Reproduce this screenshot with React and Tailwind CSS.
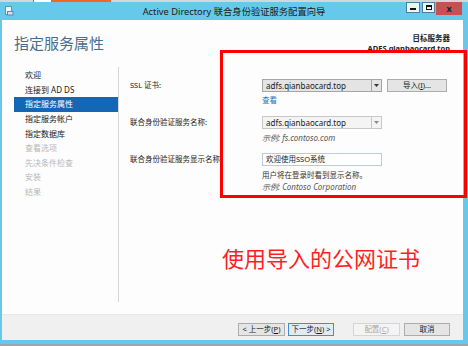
import React from 'react';

const font = "font-['Noto_Sans','Noto_Sans_CJK_SC',sans-serif]";

const steps = [
  { label: '欢迎', state: 'done' },
  { label: '连接到 AD DS', state: 'done' },
  { label: '指定服务属性', state: 'active' },
  { label: '指定服务帐户', state: 'done' },
  { label: '指定数据库', state: 'done' },
  { label: '查看选项', state: 'off' },
  { label: '先决条件检查', state: 'off' },
  { label: '安装', state: 'off' },
  { label: '结果', state: 'off' },
];

const Key = ({ k }) => <span className="underline">{k}</span>;

const WinButton = ({ children, className = '', disabled = false, focused = false }) => (
  <div
    className={`h-[13px] flex items-center justify-center border text-[7.5px] leading-none ${
      disabled
        ? 'border-[#d5d5d5] bg-[#f4f4f4] text-[#a8a8a8]'
        : focused
        ? 'border-[#3d8ee0] bg-[#e3eaf2] text-[#1a1a1a]'
        : 'border-[#acacac] bg-[#e5e5e5] text-[#1a1a1a]'
    } ${className}`}
  >
    {children}
  </div>
);

const Combo = ({ value, light = false }) => (
  <div
    className={`w-[120px] h-[13px] flex border ${
      light ? 'border-[#c8c8c8] bg-[#f4f4f4]' : 'border-[#a5a5a5] bg-[#e4e4e4]'
    }`}
  >
    <div className="flex-1 flex items-center pl-[3px] text-[8px] leading-none text-[#1a1a1a]">{value}</div>
    <div className={`w-[10px] flex items-center justify-center border-l ${light ? 'border-[#c8c8c8]' : 'border-[#a5a5a5]'}`}>
      <svg width="5" height="3" viewBox="0 0 5 3">
        <path d="M0 0 L5 0 L2.5 3 Z" fill={light ? '#8a8a8a' : '#333'} />
      </svg>
    </div>
  </div>
);

export default function App() {
  return (
    <div className={`w-[468px] h-[346px] relative overflow-hidden flex flex-col bg-[#b9c0c6] ${font}`}>
      {/* strip of the desktop above the window */}
      <div className="h-[2px] flex bg-[#d6d6d6]">
        <div className="w-[33px]" />
        <div className="w-[1px] bg-[#777]" />
        <div className="w-[17px] bg-white" />
        <div className="w-[60px] bg-[#f26522]" />
      </div>

      <div className="flex-1 flex flex-col bg-[#66c9ec] pl-[2px] pr-[5px] pb-[4px]">
        {/* title bar */}
        <div className="h-[18px] -ml-[2px] -mr-[5px] grid grid-cols-[1fr_auto_1fr]">
          <div className="flex items-center pl-[5px]">
            <svg width="9" height="10" viewBox="0 0 9 10">
              <rect x="0.5" y="0.5" width="6" height="8" fill="#eef6fb" stroke="#6d8fa8" />
              <rect x="2" y="5" width="6.5" height="4.5" fill="#5b88b0" />
              <rect x="3" y="6" width="4.5" height="2.5" fill="#cfe3f1" />
            </svg>
          </div>
          <div className="flex items-center text-[9.3px] leading-none text-[#1a1a1a] pt-[1px]">
            Active Directory 联合身份验证服务配置向导
          </div>
          <div className="flex justify-end items-start pr-[6px]">
            <div className="w-[14px] h-[11px] mr-[2px] bg-[#eaf5fb] border border-[#4d7f98] flex items-end justify-center pb-[2px]">
              <div className="w-[6px] h-[2px] bg-[#111]" />
            </div>
            <div className="w-[13px] h-[11px] mr-[1px] bg-[#eaf5fb] border border-[#4d7f98] flex items-center justify-center">
              <div className="w-[6px] h-[5px] border border-[#111] border-t-2" />
            </div>
            <div className="w-[26px] h-[13px] bg-[#c75050] flex items-center justify-center text-[9px] font-bold leading-none text-[#222]">
              x
            </div>
          </div>
        </div>

        {/* client area */}
        <div className="flex-1 flex flex-col bg-[#fdfdfd]">
          <div className="h-[45px] flex justify-between pl-[12px] pr-[13px]">
            <div className="pt-[14px] text-[15px] leading-[18px] text-[#4a6d8e]">指定服务属性</div>
            <div className="pt-[13px] flex flex-col items-end text-[7.5px] leading-[10px] font-bold text-[#222]">
              <div>目标服务器</div>
              <div>ADFS.qianbaocard.top</div>
            </div>
          </div>

          <div className="flex-1 flex pt-[2px] pb-[12px]">
            {/* steps */}
            <div className="ml-[12px] w-[105px] border-r border-[#d6d6d6] pt-[1px]">
              {steps.map((s) => (
                <div
                  key={s.label}
                  className={`h-[14.6px] flex items-center pl-[11px] text-[8px] leading-none ${
                    s.state === 'active'
                      ? 'bg-[#1467b5] text-white'
                      : s.state === 'done'
                      ? 'text-[#1a1a1a]'
                      : 'text-[#b8b8b8]'
                  }`}
                >
                  {s.label}
                </div>
              ))}
            </div>

            {/* form */}
            <div className="flex-1 pl-[11px] text-[7.5px] leading-none text-[#1a1a1a]">
              <div className="mt-[12px] flex">
                <div className="w-[132px] h-[13px] flex items-center">SSL 证书:</div>
                <div>
                  <div className="flex">
                    <Combo value="adfs.qianbaocard.top" />
                    <WinButton className="ml-[5px] w-[60px]">
                      导入(<Key k="I" />)...
                    </WinButton>
                  </div>
                  <div className="mt-[4px] h-[10px] flex items-center text-[#1c6fc4]">查看</div>
                </div>
              </div>

              <div className="mt-[10px] flex">
                <div className="w-[132px] h-[13px] flex items-center">联合身份验证服务名称:</div>
                <div>
                  <Combo value="adfs.qianbaocard.top" light />
                  <div className="mt-[4px] h-[10px] flex items-center italic text-[8px] text-[#555]">示例: fs.contoso.com</div>
                </div>
              </div>

              <div className="mt-[10px] flex">
                <div className="w-[132px] h-[13px] flex items-center">联合身份验证服务显示名称:</div>
                <div>
                  <div className="w-[120px] h-[13px] flex items-center pl-[3px] border border-[#b7cde2] bg-white text-[7.5px]">
                    欢迎使用SSO系统
                  </div>
                  <div className="mt-[5px] h-[10px] flex items-center text-[#333]">用户将在登录时看到显示名称。</div>
                  <div className="mt-[1px] h-[10px] flex items-center italic text-[8px] text-[#555]">示例: Contoso Corporation</div>
                </div>
              </div>

              <div className="mt-[52px] ml-[92px] text-[22px] leading-[28px] text-[#ff1f1f] whitespace-nowrap">
                使用导入的公网证书
              </div>
            </div>
          </div>

          {/* button bar */}
          <div className="h-[26px] flex items-start justify-end pt-[8px] pr-[13px] bg-[#f0f0f0] border-t border-[#e6e6e6]">
            <WinButton className="w-[47px]">
              &lt; 上一步(<Key k="P" />)
            </WinButton>
            <WinButton className="ml-[3px] w-[46px]" focused>
              下一步(<Key k="N" />) &gt;
            </WinButton>
            <WinButton className="ml-[19px] w-[47px]" disabled>
              配置(<Key k="C" />)
            </WinButton>
            <WinButton className="ml-[4px] w-[46px]">取消</WinButton>
          </div>
        </div>
      </div>

      <div className="h-[2px] bg-[#9ea6ad]" />

      {/* annotation drawn over the screenshot */}
      <div className="absolute left-[220px] top-[50px] w-[247px] h-[148px] border-[3px] border-[#ff0000]" />
    </div>
  );
}
